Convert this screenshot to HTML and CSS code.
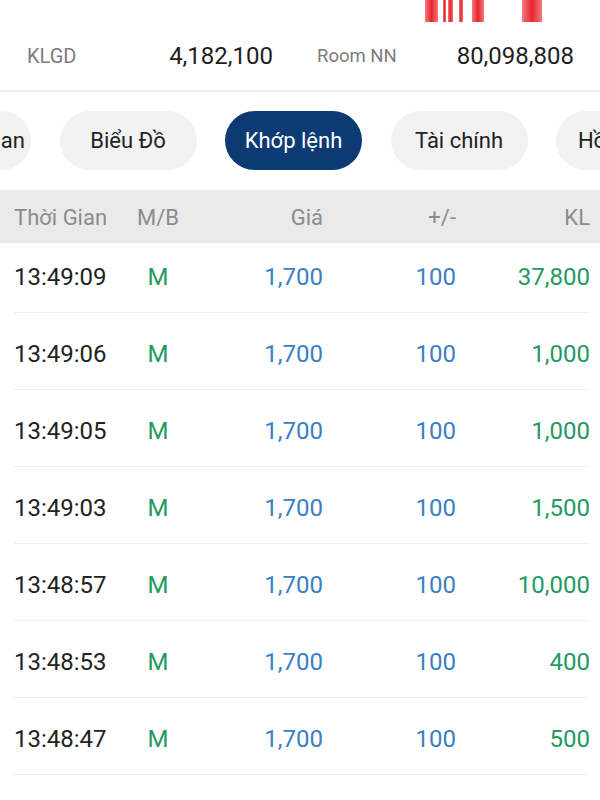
FILE: index.html
```html
<html>
<head>
  <meta charset="UTF-8">
  <title>Khớp lệnh</title>
  <link rel="stylesheet" href="styles.css">
</head>
<body>
  <div class="chart">
    <svg width="600" height="22" viewBox="0 0 600 22">
      <defs>
        <linearGradient id="bar" x1="0" y1="0" x2="1" y2="0">
          <stop offset="0" stop-color="#f27a7e"/>
          <stop offset="0.5" stop-color="#e8262d"/>
          <stop offset="1" stop-color="#f27a7e"/>
        </linearGradient>
      </defs>
      <rect x="425" y="0" width="13" height="22" fill="url(#bar)"/>
      <rect x="443" y="0" width="3" height="22" fill="url(#bar)"/>
      <rect x="448" y="0" width="5" height="22" fill="url(#bar)"/>
      <rect x="459" y="0" width="4" height="22" fill="url(#bar)"/>
      <rect x="472" y="0" width="12" height="22" fill="url(#bar)"/>
      <rect x="522" y="0" width="20" height="22" fill="url(#bar)"/>
    </svg>
  </div>

  <div class="stats">
    <div class="stat">
      <span class="label">KLGD</span>
      <span class="value">4,182,100</span>
    </div>
    <div class="stat">
      <span class="label small">Room NN</span>
      <span class="value">80,098,808</span>
    </div>
  </div>

  <div class="tabs-wrap">
    <div class="tabs">
      <div class="tab">Tin liên quan</div>
      <div class="tab">Biểu Đồ</div>
      <div class="tab active">Khớp lệnh</div>
      <div class="tab">Tài chính</div>
      <div class="tab">Hồ sơ DN</div>
    </div>
  </div>

  <div class="thead">
    <div>Thời Gian</div>
    <div class="c">M/B</div>
    <div class="r">Giá</div>
    <div class="r">+/-</div>
    <div class="r">KL</div>
  </div>

  <div class="tbody">
    <div class="row first">
      <div class="time">13:49:09</div><div class="c up">M</div><div class="r ref">1,700</div><div class="r ref">100</div><div class="r up">37,800</div>
    </div>
    <div class="row">
      <div class="time">13:49:06</div><div class="c up">M</div><div class="r ref">1,700</div><div class="r ref">100</div><div class="r up">1,000</div>
    </div>
    <div class="row">
      <div class="time">13:49:05</div><div class="c up">M</div><div class="r ref">1,700</div><div class="r ref">100</div><div class="r up">1,000</div>
    </div>
    <div class="row">
      <div class="time">13:49:03</div><div class="c up">M</div><div class="r ref">1,700</div><div class="r ref">100</div><div class="r up">1,500</div>
    </div>
    <div class="row">
      <div class="time">13:48:57</div><div class="c up">M</div><div class="r ref">1,700</div><div class="r ref">100</div><div class="r up">10,000</div>
    </div>
    <div class="row">
      <div class="time">13:48:53</div><div class="c up">M</div><div class="r ref">1,700</div><div class="r ref">100</div><div class="r up">400</div>
    </div>
    <div class="row">
      <div class="time">13:48:47</div><div class="c up">M</div><div class="r ref">1,700</div><div class="r ref">100</div><div class="r up">500</div>
    </div>
  </div>
</body>
</html>
```

FILE: styles.css
```css
body {
  font-family: Roboto, "Noto Sans", sans-serif;
  background: #fff;
  color: #222;
  margin: 0;
}
.chart svg { display: block; }

.stats {
  display: grid;
  grid-template-columns: 246px 257px;
  gap: 44px;
  height: 68px;
  align-items: center;
  padding-left: 27px;
  border-bottom: 2px solid #ececec;
}
.stat {
  display: flex;
  justify-content: space-between;
  align-items: center;
}
.label { font-size: 20px; color: #7c7c7c; }
.label.small { font-size: 18.5px; }
.value { font-size: 24px; color: #1e1e1e; }

.tabs-wrap {
  overflow: hidden;
  padding: 19px 0 20px;
}
.tabs {
  display: flex;
  gap: 28.5px;
  margin-left: -106px;
}
.tab {
  flex: 0 0 137px;
  height: 59px;
  border-radius: 30px;
  background: #f2f2f2;
  color: #222;
  font-size: 22px;
  display: flex;
  align-items: center;
  justify-content: center;
  white-space: nowrap;
}
.tab.active {
  background: #0c3b74;
  color: #fff;
}

.thead, .row {
  display: grid;
  grid-template-columns: 112px 64px 133px 133px 134px;
}
.thead {
  height: 53px;
  align-items: center;
  background: #eaeaea;
  color: #8c8c8c;
  font-size: 22px;
  padding: 2px 10px 0 14px;
  box-sizing: border-box;
  position: relative;
  z-index: 1;
}
.c { text-align: center; }
.r { text-align: right; }

.tbody { overflow: hidden; }
.row {
  margin: 0 10px 0 14px;
  padding: 30px 0 24px;
  line-height: 22px;
  font-size: 24px;
  border-bottom: 1px solid #efefef;
}
.row.first { margin-top: -7px; }
.time { color: #222; }
.up { color: #239a62; }
.ref { color: #3a80c4; }
```
